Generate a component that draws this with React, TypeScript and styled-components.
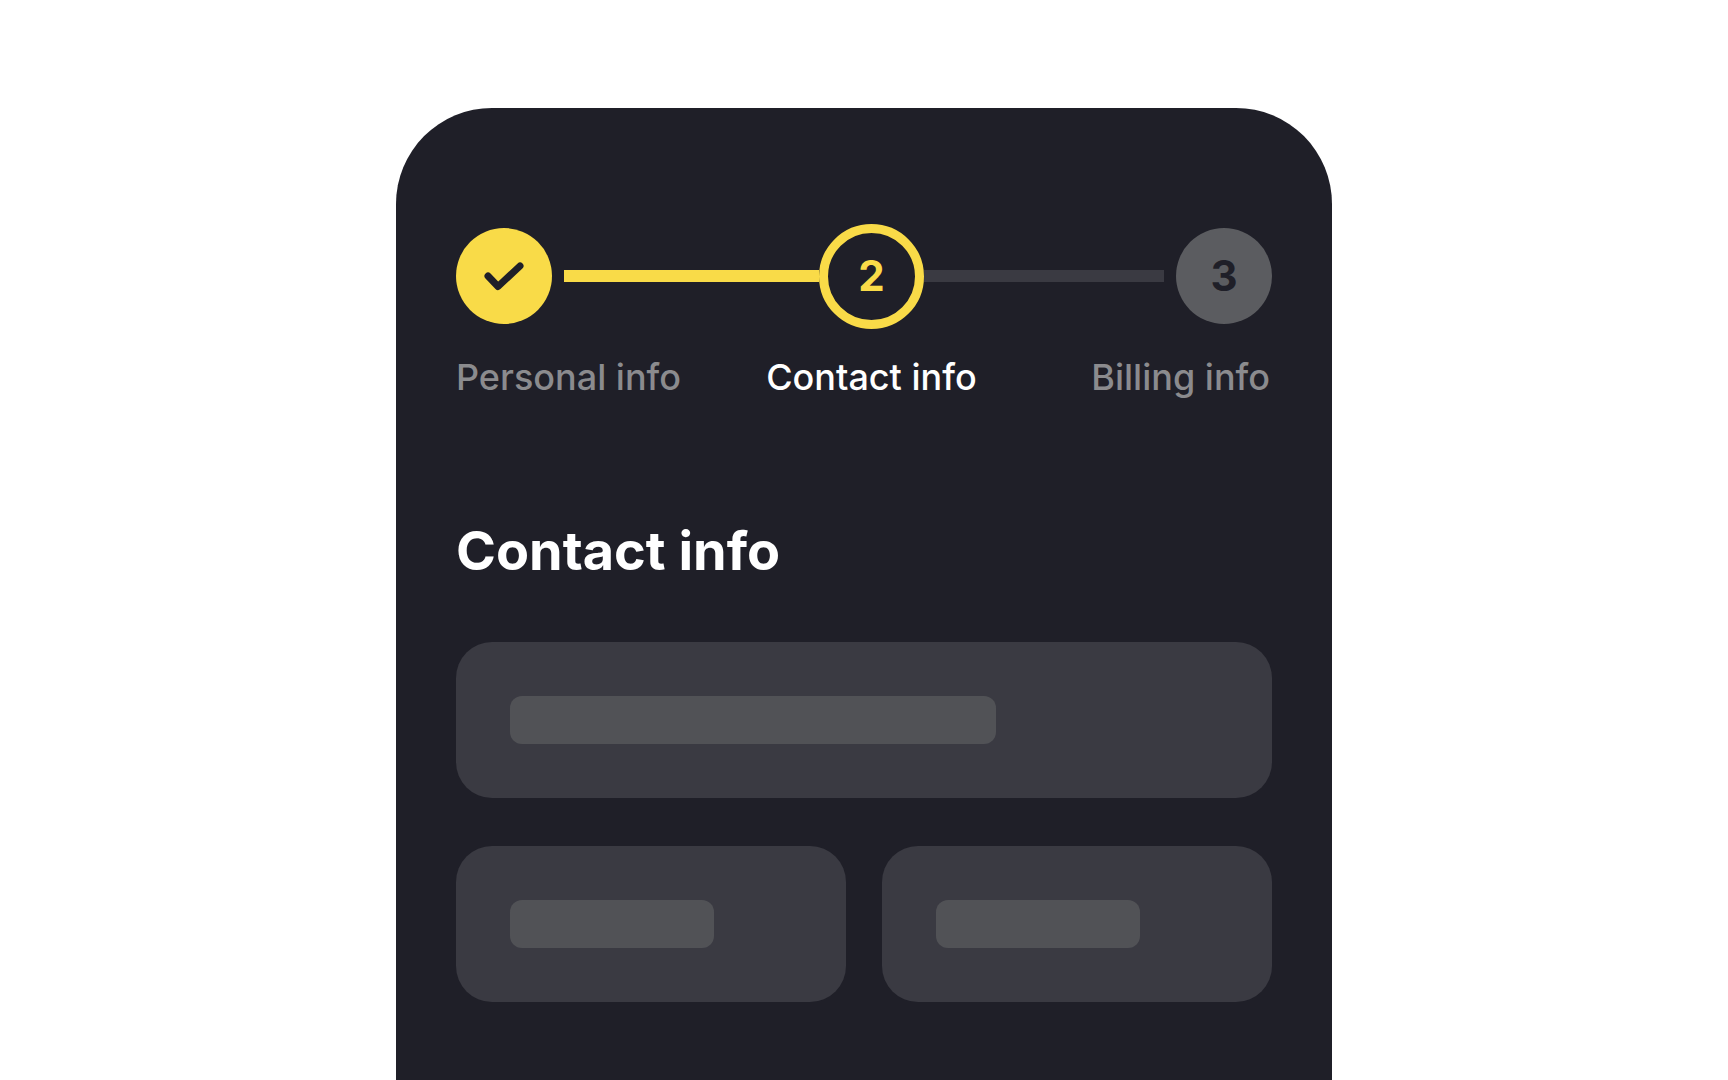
import React from "react";
import styled, { createGlobalStyle } from "styled-components";

type Status = "done" | "current" | "upcoming";

const color = {
  panel: "#1f1f28",
  accent: "#f9db48",
  field: "#3a3a42",
  bar: "#515256",
  upcoming: "#5b5c60",
  muted: "#8b8b8e",
  text: "#ffffff",
};

const GlobalStyle = createGlobalStyle`
  *, *::before, *::after { box-sizing: border-box; }
  body {
    margin: 0;
    background: #ffffff;
    font-family: Inter, "Liberation Sans", sans-serif;
  }
`;

const Page = styled.div`
  display: flex;
  justify-content: center;
  min-height: 100vh;
  padding-top: 108px;
`;

const Panel = styled.main`
  width: 100%;
  max-width: 936px;
  padding: 115px 60px 77px;
  border-radius: 96px 96px 0 0;
  background: ${color.panel};
`;

/* Circles sit in the fixed columns, connectors in the flexible ones. */
const Stepper = styled.ol`
  display: grid;
  grid-template-columns: 96px 18fr 105px 17fr 96px;
  grid-template-rows: 106px auto;
  row-gap: 26px;
  align-items: center;
  margin: 0;
  padding: 0;
  list-style: none;
`;

const Step = styled.li`
  display: contents;
`;

const Circle = styled.span<{ $status: Status; $column: number }>`
  grid-row: 1;
  grid-column: ${(p) => p.$column};
  display: flex;
  align-items: center;
  justify-content: center;
  aspect-ratio: 1;
  border: ${(p) => (p.$status === "current" ? `9px solid ${color.accent}` : "none")};
  border-radius: 50%;
  background: ${(p) =>
    p.$status === "done" ? color.accent : p.$status === "upcoming" ? color.upcoming : "transparent"};
  color: ${(p) => (p.$status === "current" ? color.accent : color.panel)};
  font-size: 42px;
  font-weight: 700;
  line-height: 48px;
`;

const Connector = styled.span<{ $column: number; $complete?: boolean }>`
  grid-row: 1;
  grid-column: ${(p) => p.$column};
  height: 12px;
  margin-left: ${(p) => (p.$complete ? 12 : 0)}px;
  margin-right: ${(p) => (p.$complete ? 0 : 12)}px;
  background: ${(p) => (p.$complete ? color.accent : color.field)};
`;

const Label = styled.span<{ $columns: string; $align: string; $active?: boolean }>`
  grid-row: 2;
  grid-column: ${(p) => p.$columns};
  justify-self: ${(p) => p.$align};
  padding-right: ${(p) => (p.$align === "end" ? 2 : 0)}px;
  color: ${(p) => (p.$active ? color.text : color.muted)};
  font-size: 36px;
  font-weight: 500;
  line-height: 44px;
  white-space: nowrap;
`;

const Title = styled.h1`
  margin: 119px 0 58px;
  color: ${color.text};
  font-size: 54px;
  font-weight: 700;
  line-height: 66px;
`;

const Fields = styled.div`
  display: grid;
  grid-template-columns: 1fr 1fr;
  gap: 48px 36px;
`;

const Field = styled.div<{ $wide?: boolean }>`
  grid-column: ${(p) => (p.$wide ? "1 / -1" : "auto")};
  padding: 54px;
  border-radius: 36px;
  background: ${color.field};
`;

const Bar = styled.div<{ $width: number }>`
  width: ${(p) => p.$width}px;
  max-width: 100%;
  height: 48px;
  border-radius: 12px;
  background: ${color.bar};
`;

const CheckIcon = () => (
  <svg width="48" height="48" viewBox="0 0 48 48" fill="none" role="img" aria-label="Completed">
    <path
      d="M8 24L18 34.5L40 14"
      stroke="currentColor"
      strokeWidth="7"
      strokeLinecap="round"
      strokeLinejoin="round"
    />
  </svg>
);

export default function App() {
  return (
    <>
      <GlobalStyle />
      <Page>
        <Panel>
          <Stepper>
            <Step>
              <Circle $status="done" $column={1}>
                <CheckIcon />
              </Circle>
              <Connector $column={2} $complete />
              <Label $columns="1 / 3" $align="start">Personal info</Label>
            </Step>
            <Step aria-current="step">
              <Circle $status="current" $column={3}>2</Circle>
              <Connector $column={4} />
              <Label $columns="3" $align="center" $active>Contact info</Label>
            </Step>
            <Step>
              <Circle $status="upcoming" $column={5}>3</Circle>
              <Label $columns="4 / 6" $align="end">Billing info</Label>
            </Step>
          </Stepper>
          <Title>Contact info</Title>
          <Fields aria-hidden="true">
            <Field $wide>
              <Bar $width={486} />
            </Field>
            <Field>
              <Bar $width={204} />
            </Field>
            <Field>
              <Bar $width={204} />
            </Field>
          </Fields>
        </Panel>
      </Page>
    </>
  );
}
